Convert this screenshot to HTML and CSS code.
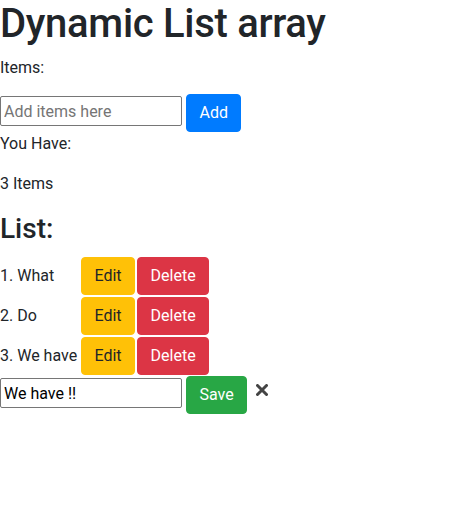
FILE: index.html
```html
<!DOCTYPE html>
<html>
<head>
<meta charset="utf-8">
<link rel="stylesheet" href="styles.css">
</head>
<body>
<div class="app">
  <h1 class="title">Dynamic List array</h1>
  <p class="label">Items:</p>
  <div class="form-row">
    <input class="text-input" type="text" placeholder="Add items here">
    <button class="btn btn-primary">Add</button>
  </div>
  <p class="text">You Have:</p>
  <p class="text">3 Items</p>
  <h3 class="list-title">List:</h3>
  <div class="list">
    <div class="item">
      <span class="item-text">1. What</span>
      <button class="btn btn-warning item-btn">Edit</button>
      <button class="btn btn-danger item-btn">Delete</button>
    </div>
    <div class="item">
      <span class="item-text">2. Do</span>
      <button class="btn btn-warning item-btn">Edit</button>
      <button class="btn btn-danger item-btn">Delete</button>
    </div>
    <div class="item">
      <span class="item-text">3. We have</span>
      <button class="btn btn-warning item-btn">Edit</button>
      <button class="btn btn-danger item-btn">Delete</button>
    </div>
  </div>
  <div class="form-row">
    <input class="text-input filled" type="text" value="We have !!">
    <button class="btn btn-success">Save</button>
    <span class="close-icon">
      <svg width="12" height="12" viewBox="0 0 12 12"><path d="M1.5 1.5 L10.5 10.5 M10.5 1.5 L1.5 10.5" stroke="#444" stroke-width="3" stroke-linecap="round"/></svg>
    </span>
  </div>
</div>
</body>
</html>
```
FILE: styles.css
```css
* { box-sizing: border-box; }
html, body { margin: 0; padding: 0; background: #fff; }
body {
  font-family: "Roboto", "Liberation Sans", sans-serif;
  font-size: 16px;
  line-height: 24px;
  color: #212529;
}
.title {
  font-size: 40px;
  font-weight: 500;
  line-height: 48px;
  margin: 0 0 8px 0;
  letter-spacing: -0.3px;
}
.label { margin: 0 0 14px 0; }
.text { margin: 0 0 16px 0; }
.form-row {
  display: flex;
  align-items: flex-start;
  height: 38px;
}
.text-input {
  width: 182px;
  height: 30px;
  margin: 2px 4px 0 0;
  padding: 1px 3px;
  border: 1px solid #767676;
  border-radius: 2px;
  font-family: inherit;
  font-size: 16px;
  color: #000;
  background: #fff;
}
.text-input::placeholder { color: #757575; }
.btn {
  display: inline-block;
  font-family: inherit;
  font-size: 16px;
  font-weight: 400;
  line-height: 24px;
  padding: 6px 12.5px;
  border: 1px solid transparent;
  border-radius: 4px;
  cursor: pointer;
}
.btn-primary { background: #007bff; border-color: #007bff; color: #fff; }
.btn-warning { background: #ffc107; border-color: #ffc107; color: #212529; }
.btn-danger { background: #dc3545; border-color: #dc3545; color: #fff; }
.btn-success { background: #28a745; border-color: #28a745; color: #fff; }
.list-title {
  font-size: 28px;
  font-weight: 500;
  line-height: 34px;
  margin: 0 0 10px 0;
}
.list { display: flex; flex-direction: column; }
.item { display: flex; align-items: center; height: 40px; }
.item-text { width: 80px; flex: none; white-space: nowrap; }
.item-btn { margin: 1px; }
.close-icon {
  display: flex;
  margin-left: 9px;
  margin-top: 8px;
}
```
